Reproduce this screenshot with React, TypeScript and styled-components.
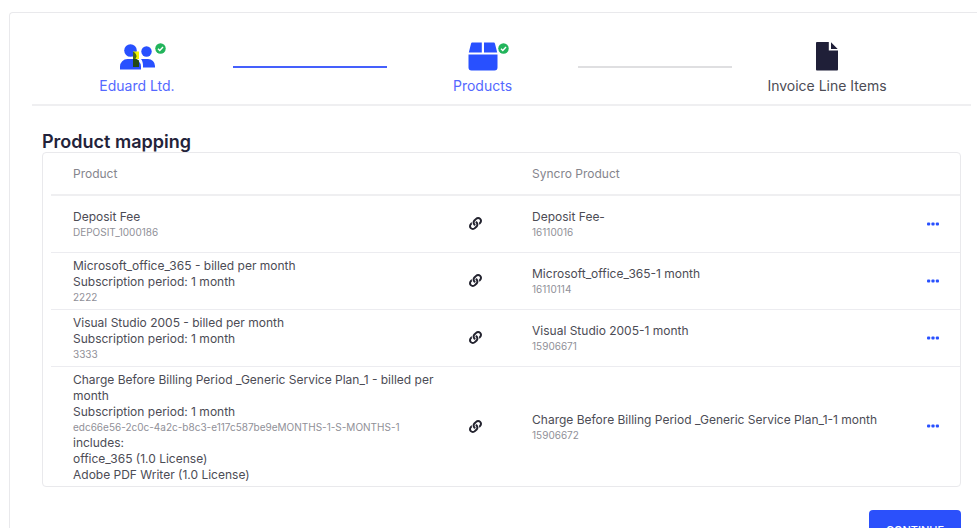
import React from "react";
import styled, { createGlobalStyle } from "styled-components";

const Global = createGlobalStyle`
  *, *::before, *::after { box-sizing: border-box; }
  body { margin: 0; background: #fff; color: #4c4c55; font-family: Inter, "Liberation Sans", sans-serif; font-size: 12px; line-height: 16px; overflow: hidden; }
`;

const Viewport = styled.div`
  height: calc(100vh - 4px);
  overflow: hidden;
  padding: 12px 0 0 9px;
`;

const Card = styled.main`
  min-height: 100vh;
  border: 1px solid #e9e9ec;
  border-right: 0;
  border-top-left-radius: 4px;
  padding: 28px 6px 0 22px;
`;

const Stepper = styled.ol`
  list-style: none;
  margin: 0;
  padding: 0 49px 0 9px;
  height: 65px;
  display: grid;
  grid-template-columns: 192fr 154fr 191fr 154fr 190fr;
  border-bottom: 2px solid #efeff1;
`;

const Step = styled.li<{ $pending?: boolean }>`
  display: flex;
  flex-direction: column;
  align-items: center;
  gap: 7px;
  font-size: 14px;
  white-space: nowrap;
  color: ${(p) => (p.$pending ? "#4c4c55" : "#5468ff")};
`;

const StepIcon = styled.span`
  position: relative;
  display: flex;
  height: 30px;
`;

const Tick = styled.svg`
  position: absolute;
  left: 100%;
  top: 2px;
`;

const Connector = styled.li<{ $done?: boolean }>`
  margin-top: 25px;
  height: 2px;
  background: ${(p) => (p.$done ? "#4560fc" : "#dfdfe1")};
`;

const Content = styled.section`
  padding: 26px 10px 0;
`;

const Title = styled.h2`
  margin: 0;
  font-size: 18px;
  line-height: 20px;
  font-weight: 600;
  color: #23233a;
`;

const Panel = styled.div`
  border: 1px solid #e9e9ec;
  border-radius: 4px;
  padding-left: 8px;
`;

const Table = styled.table`
  width: 100%;
  border-collapse: collapse;
  table-layout: fixed;
`;

const Column = styled.col<{ $share?: number }>`
  width: ${(p) => (p.$share ? `${p.$share}%` : "auto")};
`;

const Head = styled.th`
  height: 42px;
  padding: 0 0 0 22px;
  text-align: left;
  font-weight: 400;
  color: #85858d;
  border-bottom: 2px solid #efeff1;
`;

const Row = styled.tr`
  & + & { border-top: 1px solid #ececf0; }
`;

const Cell = styled.td`
  height: 57px;
  padding: 5px 0 3px 22px;
  vertical-align: middle;
`;

const IconCell = styled.td`
  padding: 0;
  vertical-align: middle;

  & > * { display: block; margin: 0 auto; }
`;

const Code = styled.div`
  font-size: 10px;
  line-height: 15px;
  color: #909098;
`;

const MoreButton = styled.button`
  border: 0;
  background: none;
  padding: 4px;
  cursor: pointer;

  svg { display: block; }
`;

const Actions = styled.div`
  display: flex;
  justify-content: flex-end;
  margin-top: 23px;
`;

const Continue = styled.button`
  border: 0;
  border-radius: 4px;
  padding: 12px 16px;
  background: #2b50fb;
  color: #fff;
  font: 500 11px/16px Inter, "Liberation Sans", sans-serif;
  min-width: 92px;
  white-space: nowrap;
  cursor: pointer;
`;

const DoneTick = () => (
  <Tick width="11" height="11" viewBox="0 0 22 22" role="img" aria-label="Done">
    <circle cx="11" cy="11" r="10.5" fill="#22b45b" />
    <path d="M6 11.5l3.6 3.5L16 8" fill="none" stroke="#fff" strokeWidth="2.8" />
  </Tick>
);

const UsersIcon = () => (
  <svg width="36" height="30" viewBox="0 0 36 30" aria-hidden="true">
    <circle cx="11.5" cy="9.5" r="6.300" fill="#2850ff" />
    <circle cx="27.500" cy="10.500" r="5.200" fill="#2850ff" />
    <path d="M1 28.500v-3a7.500 7.500 0 0 1 7.500-7.500h6a7.500 7.500 0 0 1 7.500 7.500v3z" fill="#2850ff" />
    <path d="M22 18h7a7 7 0 0 1 7 7v1.500H24v-2c0-2.600-.7-4.800-2-6.500z" fill="#2850ff" />
    <path d="M14 10.500h6v7.500h-6z" fill="#f5f500" />
    <path d="M14 10.500q3.500 2 3.500 5l-1 2.500H14z" fill="#4a6a10" />
    <path d="M14 18h3.500l2.500 1.500V26h-6z" fill="#244a16" />
  </svg>
);

const BoxIcon = () => (
  <svg width="30" height="30" viewBox="0 0 30 30" aria-hidden="true">
    <path d="M4.500 1.500h9.300v10H.8L3 2.800c.2-.9.700-1.300 1.500-1.300zM16 1.500h9.500c.8 0 1.300.4 1.500 1.300l2.200 8.700H16zM.5 13.500h29v13a3 3 0 0 1-3 3h-23a3 3 0 0 1-3-3z" fill="#2850ff" />
  </svg>
);

const FileIcon = () => (
  <svg width="22" height="30" viewBox="0 0 22 30" aria-hidden="true">
    <path d="M1.200 1h11.600v8.400H22v18.800c0 .8-.4 1.300-1.200 1.300H1.200C.4 29.500 0 29 0 28.200V2.300C0 1.500.4 1 1.200 1zM15 1.300L21.700 8H15z" fill="#1f1f38" />
  </svg>
);

const LinkIcon = () => (
  <svg width="13" height="13" viewBox="0 0 512 512" role="img" aria-label="Linked">
    <path fill="#23232f" d="M326.612 185.391c59.747 59.809 58.927 155.698.36 214.590-.11.120-.24.250-.36.370l-67.200 67.200c-59.270 59.270-155.699 59.262-214.960 0-59.270-59.260-59.270-155.700 0-214.960l37.106-37.106c9.840-9.840 26.786-3.300 27.294 10.606.648 17.722 3.826 35.527 9.690 52.721 1.986 5.822.567 12.262-3.783 16.612l-13.087 13.087c-28.026 28.026-28.905 73.660-1.155 101.960 28.024 28.579 74.086 28.749 102.325.510l67.200-67.190c28.191-28.191 28.073-73.757 0-101.830-3.701-3.694-7.429-6.564-10.341-8.569a16.037 16.037 0 0 1-6.947-12.606c-.396-10.567 3.348-21.456 11.698-29.806l21.054-21.055c5.521-5.521 14.182-6.199 20.584-1.731a152.482 152.482 0 0 1 20.522 17.197zM467.547 44.449c-59.261-59.262-155.690-59.270-214.960 0l-67.200 67.200c-.12.120-.25.250-.36.370-58.566 58.892-59.387 154.781.36 214.590a152.454 152.454 0 0 0 20.521 17.196c6.402 4.468 15.064 3.789 20.584-1.731l21.054-21.055c8.350-8.350 12.094-19.239 11.698-29.806a16.037 16.037 0 0 0-6.947-12.606c-2.912-2.005-6.640-4.875-10.341-8.569-28.073-28.073-28.191-73.639 0-101.830l67.200-67.190c28.239-28.239 74.300-28.069 102.325.510 27.750 28.300 26.872 73.934-1.155 101.960l-13.087 13.087c-4.350 4.350-5.769 10.790-3.783 16.612 5.864 17.194 9.042 34.999 9.690 52.721.509 13.906 17.454 20.446 27.294 10.606l37.106-37.106c59.271-59.259 59.271-155.699.001-214.959z" />
  </svg>
);

const DotsIcon = () => (
  <svg width="12" height="4" viewBox="0 0 12 4" aria-hidden="true">
    <g fill="#2850ff">
      <rect x="0" y="0.5" width="3.2" height="3" rx="1" />
      <rect x="4.4" y="0.5" width="3.2" height="3" rx="1" />
      <rect x="8.8" y="0.5" width="3.2" height="3" rx="1" />
    </g>
  </svg>
);

interface Mapping {
  lines: string[];
  code: string;
  includes?: string[];
  target: string;
  targetCode: string;
}

const mappings: Mapping[] = [
  { lines: ["Deposit Fee"], code: "DEPOSIT_1000186", target: "Deposit Fee-", targetCode: "16110016" },
  { lines: ["Microsoft_office_365 - billed per month", "Subscription period: 1 month"], code: "2222", target: "Microsoft_office_365-1 month", targetCode: "16110114" },
  { lines: ["Visual Studio 2005 - billed per month", "Subscription period: 1 month"], code: "3333", target: "Visual Studio 2005-1 month", targetCode: "15906671" },
  {
    lines: ["Charge Before Billing Period _Generic Service Plan_1 - billed per month", "Subscription period: 1 month"],
    code: "edc66e56-2c0c-4a2c-b8c3-e117c587be9eMONTHS-1-S-MONTHS-1",
    includes: ["includes:", "office_365 (1.0 License)", "Adobe PDF Writer (1.0 License)"],
    target: "Charge Before Billing Period _Generic Service Plan_1-1 month",
    targetCode: "15906672",
  },
];

export default function App() {
  return (
    <>
      <Global />
      <Viewport>
        <Card>
          <Stepper>
            <Step><StepIcon><UsersIcon /><DoneTick /></StepIcon>Eduard Ltd.</Step>
            <Connector $done role="presentation" />
            <Step><StepIcon><BoxIcon /><DoneTick /></StepIcon>Products</Step>
            <Connector role="presentation" />
            <Step $pending><StepIcon><FileIcon /></StepIcon>Invoice Line Items</Step>
          </Stepper>
          <Content>
            <Title>Product mapping</Title>
            <Panel>
              <Table>
                <colgroup>
                  <Column $share={43} />
                  <Column $share={7.5} />
                  <Column $share={43.5} />
                  <Column />
                </colgroup>
                <thead>
                  <tr><Head>Product</Head><Head /><Head>Syncro Product</Head><Head /></tr>
                </thead>
                <tbody>
                  {mappings.map((m) => (
                    <Row key={m.code}>
                      <Cell>
                        {m.lines.map((l) => <div key={l}>{l}</div>)}
                        <Code>{m.code}</Code>
                        {m.includes?.map((l) => <div key={l}>{l}</div>)}
                      </Cell>
                      <IconCell><LinkIcon /></IconCell>
                      <Cell><div>{m.target}</div><Code>{m.targetCode}</Code></Cell>
                      <IconCell><MoreButton aria-label={`More actions for ${m.target}`}><DotsIcon /></MoreButton></IconCell>
                    </Row>
                  ))}
                </tbody>
              </Table>
            </Panel>
            <Actions><Continue>CONTINUE</Continue></Actions>
          </Content>
        </Card>
      </Viewport>
    </>
  );
}
